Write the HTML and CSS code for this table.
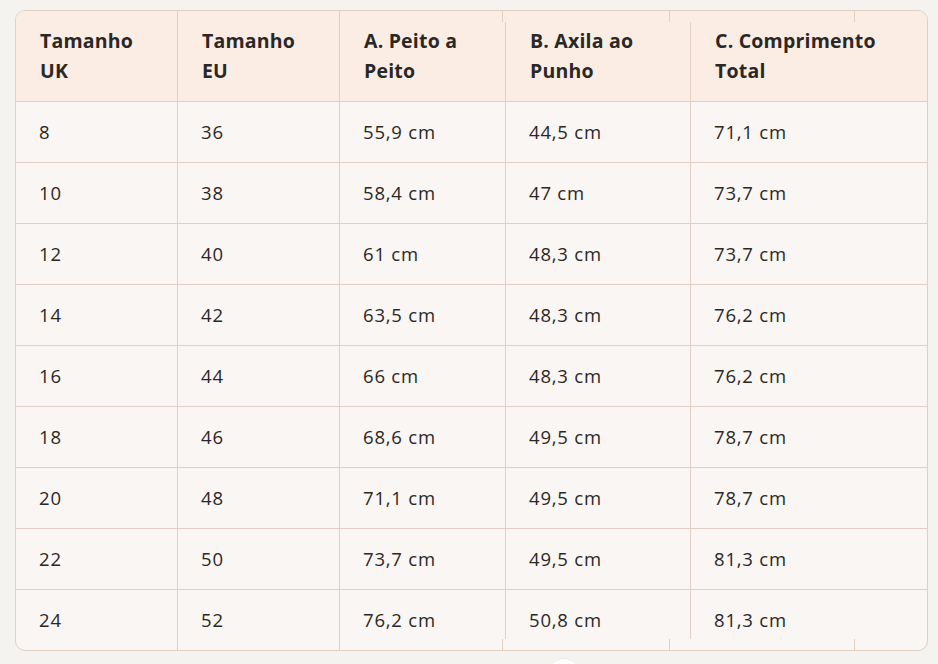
FILE: index.html
```html
<!DOCTYPE html>
<html lang="pt">
<head>
<meta charset="utf-8">
<title>Tabela de tamanhos</title>
<link rel="stylesheet" href="styles.css">
</head>
<body>
<div class="table-wrap">
  <table class="sizes">
    <thead>
      <tr>
        <th class="c1">Tamanho<br>UK</th>
        <th class="c2">Tamanho<br>EU</th>
        <th class="c3">A. Peito a<br>Peito</th>
        <th class="c4">B. Axila ao<br>Punho</th>
        <th class="c5">C. Comprimento<br>Total</th>
      </tr>
    </thead>
    <tbody>
      <tr><td>8</td><td>36</td><td>55,9 cm</td><td>44,5 cm</td><td>71,1 cm</td></tr>
      <tr><td>10</td><td>38</td><td>58,4 cm</td><td>47 cm</td><td>73,7 cm</td></tr>
      <tr><td>12</td><td>40</td><td>61 cm</td><td>48,3 cm</td><td>73,7 cm</td></tr>
      <tr><td>14</td><td>42</td><td>63,5 cm</td><td>48,3 cm</td><td>76,2 cm</td></tr>
      <tr><td>16</td><td>44</td><td>66 cm</td><td>48,3 cm</td><td>76,2 cm</td></tr>
      <tr><td>18</td><td>46</td><td>68,6 cm</td><td>49,5 cm</td><td>78,7 cm</td></tr>
      <tr><td>20</td><td>48</td><td>71,1 cm</td><td>49,5 cm</td><td>78,7 cm</td></tr>
      <tr><td>22</td><td>50</td><td>73,7 cm</td><td>49,5 cm</td><td>81,3 cm</td></tr>
      <tr><td>24</td><td>52</td><td>76,2 cm</td><td>50,8 cm</td><td>81,3 cm</td></tr>
    </tbody>
  </table>
  <span class="gap gap-top g505"></span>
  <span class="gap gap-top g690"></span>
  <span class="gap gap-bot g505"></span>
  <span class="gap gap-bot g690"></span>
  <span class="tick tick-top t502"></span>
  <span class="tick tick-top t669"></span>
  <span class="tick tick-top t854"></span>
  <span class="tick tick-bot t502"></span>
  <span class="tick tick-bot t669"></span>
  <span class="tick tick-bot t854"></span>
</div>
<div class="scroll-btn"></div>
</body>
</html>
```
FILE: styles.css
```css
html, body {
  margin: 0;
  padding: 0;
  background: #f5f3f0;
  height: 664px;
  overflow: hidden;
}
body {
  padding: 10px 0 0 15px;
  font-family: "Open Sans", "Noto Sans", sans-serif;
  color: #2a2826;
  position: relative;
}
.table-wrap {
  position: relative;
  width: 913px;
  box-sizing: border-box;
  border: 1px solid #e2cfc2;
  border-radius: 10px;
  overflow: hidden;
  background: #faf6f3;
}
.sizes {
  border-collapse: separate;
  border-spacing: 0;
  table-layout: fixed;
  width: 911px;
}
.sizes th, .sizes td {
  text-align: left;
  padding: 0 0 0 23px;
  border-left: 1px solid #e2cfc2;
  border-top: 1px solid #e2cfc2;
  vertical-align: middle;
  box-sizing: border-box;
  white-space: nowrap;
}
.sizes tr > :first-child { border-left: none; }
.sizes thead th {
  border-top: none;
  background: #fbede4;
  height: 90px;
  padding-left: 24px;
  font-weight: 700;
  font-size: 19.5px;
  line-height: 30px;
  letter-spacing: 0.2px;
}
.sizes td {
  height: 61px;
  padding-bottom: 2px;
  font-size: 18.5px;
  font-weight: 400;
  letter-spacing: 0.8px;
}
.c1 { width: 161px; }
.c2 { width: 162px; }
.c3 { width: 166px; }
.c4 { width: 185px; }
.c5 { width: 237px; }

.gap {
  position: absolute;
  width: 1px;
  height: 11px;
}
.gap-top { top: 0; background: #fbede4; }
.gap-bot { bottom: 0; background: #faf6f3; }
.g505 { left: 489px; }
.g690 { left: 674px; }
.tick {
  position: absolute;
  width: 1px;
  height: 11px;
  background: #e2cfc2;
}
.tick-top { top: 0; }
.tick-bot { bottom: 0; }
.t502 { left: 486px; }
.t669 { left: 653px; }
.t854 { left: 838px; }

.scroll-btn {
  position: absolute;
  left: 546px;
  top: 658px;
  width: 34px;
  height: 34px;
  border-radius: 50%;
  background: #ffffff;
  border: 1px solid #ece7e2;
}
```
